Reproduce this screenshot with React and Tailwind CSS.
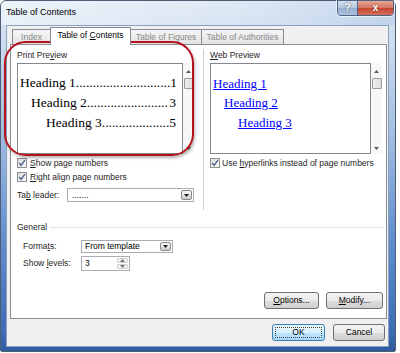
import React from 'react';

function Check() {
  return (
    <span className="w-[10px] h-[10px] shrink-0 border border-[#8f8f8f] bg-[linear-gradient(135deg,#dcdcdc,#fbfbfb)] flex items-center justify-center">
      <svg width="8" height="8" viewBox="0 0 8 8">
        <path d="M1.2 3.8 L3.1 6.3 L6.9 1.2" fill="none" stroke="#4a5a8c" strokeWidth="1.3" />
      </svg>
    </span>
  );
}

function Arrow({ up }) {
  return (
    <svg width="5" height="3" viewBox="0 0 5 3">
      <path d={up ? 'M0 3h5L2.5 0z' : 'M0 0h5L2.5 3z'} fill="#1a1a1a" />
    </svg>
  );
}

function DropBtn() {
  return (
    <span className="w-[11px] h-full shrink-0 border border-[#8a8a8a] rounded-[2px] bg-[linear-gradient(#f4f4f4,#ebebeb_50%,#dcdcdc_51%,#cfcfcf)] flex items-center justify-center">
      <Arrow />
    </span>
  );
}

function Scroll() {
  return (
    <div className="w-[11px] shrink-0 flex flex-col items-center bg-[#f7f7f7]">
      <div className="h-[10px] flex items-center justify-center mt-[3px] opacity-70">
        <Arrow up />
      </div>
      <div className="w-[10px] h-[11px] mt-[2px] border border-[#9a9a9a] rounded-[1px] bg-[linear-gradient(90deg,#f0f0f0,#dcdcdc)]" />
      <div className="flex-1" />
      <div className="h-[10px] flex items-center justify-center mb-[1px] opacity-70">
        <Arrow />
      </div>
    </div>
  );
}

function Btn({ children, w }) {
  return (
    <div className={`${w} h-[17px] border border-[#707070] rounded-[3px] bg-[linear-gradient(#f2f2f2,#ebebeb_50%,#dddddd_51%,#cfcfcf)] flex items-center justify-center text-black`}>
      {children}
    </div>
  );
}

function TocLine({ pl, label, dots, page }) {
  return (
    <div className={`flex h-[20px] items-center whitespace-nowrap leading-none ${pl}`}>
      <span>{label}</span>
      <span>{'.'.repeat(dots)}</span>
      <span className="ml-auto">{page}</span>
    </div>
  );
}

export default function App() {
  return (
    <div className="relative w-[400px] h-[353px] bg-white font-['Liberation_Sans',Arial,sans-serif] text-[8.5px] text-[#1e1e1e]">
      <div className="w-[396px] h-[352px] border border-[#4c5d76] rounded-t-[6px] rounded-b-[2px] bg-[linear-gradient(180deg,#dce7f4_0px,#cddcef_40px,#a4bfe2_130px,#6591cf_230px,#3e6cb5_330px,#2f5aa0)] flex flex-col">
        <div className="h-[24px] flex items-start justify-between rounded-t-[5px] bg-[linear-gradient(90deg,rgba(255,255,255,0.5),rgba(255,255,255,0.1)_60%,rgba(120,160,210,0.2))]">
          <span className="pl-[5px] pt-[5px] text-[9px] leading-[12px] text-black">Table of Contents</span>
          <div className="flex h-[16px] -mt-px mr-[1px] border border-[#4e6484] rounded-b-[4px] overflow-hidden shadow-[0_0_0_1px_rgba(255,255,255,0.6)]">
            <div className="w-[20px] border-r border-[#4e6484] bg-[linear-gradient(#d4e0ee,#b3c6de_50%,#98b1d2_51%,#a9c1de)] flex items-center justify-center text-white text-[10px] font-bold leading-none [text-shadow:0_0_2px_#2c3e5c]">
              ?
            </div>
            <div className="w-[35px] bg-[linear-gradient(#e8a595,#d47562_50%,#c2442f_51%,#d5715a)] flex items-center justify-center text-white text-[10px] font-bold leading-none [text-shadow:0_0_2px_#6b1a10]">
              x
            </div>
          </div>
        </div>

        <div className="ml-[5px] w-[383px] h-[322px] border border-[#8aa0bf] bg-[#f0f0f0] flex flex-col">
          <div className="h-[18px] flex items-end pl-[5px]">
            <div className="w-[39px] h-[15px] border border-b-0 border-[#898c95] bg-[linear-gradient(#f5f5f5,#e4e4e4)] text-[#8a8a8a] flex items-center justify-center">
              Index
            </div>
            <div className="-ml-px w-[81px] h-[18px] -mb-px relative z-10 border border-b-0 border-[#898c95] bg-white text-black flex items-center justify-center pb-[2px]">
              <span>
                Table of <span className="underline">C</span>ontents
              </span>
            </div>
            <div className="-ml-px w-[72px] h-[15px] border border-b-0 border-[#898c95] bg-[linear-gradient(#f5f5f5,#e4e4e4)] text-[#8a8a8a] flex items-center justify-center">
              Table of Figures
            </div>
            <div className="-ml-px w-[83px] h-[15px] border border-b-0 border-[#898c95] bg-[linear-gradient(#f5f5f5,#e4e4e4)] text-[#8a8a8a] flex items-center justify-center">
              Table of Authorities
            </div>
          </div>

          <div className="ml-[3px] w-[377px] h-[275px] border border-[#898c95] bg-white flex flex-col">
            <div className="flex pl-[6px] pt-[4px]">
              <div className="w-[177px] flex flex-col">
                <div className="h-[12px] leading-[12px]">
                  Print Pre<span className="underline">v</span>iew
                </div>
                <div className="mt-[2px] flex h-[91px]">
                  <div className="w-[166px] border border-[#828790] bg-white pt-[9px] pr-[6px] font-['Liberation_Serif',serif] text-[13.5px] text-black">
                    <TocLine pl="pl-[2px]" label="Heading 1" dots={28} page="1" />
                    <TocLine pl="pl-[13px]" label="Heading 2" dots={24} page="3" />
                    <TocLine pl="pl-[28px]" label="Heading 3" dots={20} page="5" />
                  </div>
                  <Scroll />
                </div>
                <div className="mt-[3px] h-[12px] flex items-center gap-[3px]">
                  <Check />
                  <span>
                    <span className="underline">S</span>how page numbers
                  </span>
                </div>
                <div className="mt-[2px] h-[12px] flex items-center gap-[3px]">
                  <Check />
                  <span>
                    <span className="underline">R</span>ight align page numbers
                  </span>
                </div>
                <div className="mt-[5px] h-[14px] flex items-center">
                  <span className="w-[50px]">
                    Ta<span className="underline">b</span> leader:
                  </span>
                  <div className="w-[127px] h-[14px] border border-[#abadb3] bg-white flex items-stretch p-px">
                    <span className="flex-1 pl-[3px] leading-[10px] text-black">.......</span>
                    <DropBtn />
                  </div>
                </div>
              </div>

              <div className="ml-[9px] w-[180px] h-[161px] border-l border-[#cfcfcf] pl-[6px] flex flex-col">
                <div className="h-[12px] leading-[12px]">
                  <span className="underline">W</span>eb Preview
                </div>
                <div className="mt-[2px] flex h-[91px]">
                  <div className="w-[161px] border border-[#828790] bg-white pt-[9px] font-['Liberation_Serif',serif] text-[13px] leading-none text-[#0000ff]">
                    <div className="h-[20px] flex items-center pl-[2px]">
                      <span className="underline">Heading 1</span>
                    </div>
                    <div className="h-[19px] flex items-center pl-[13px]">
                      <span className="underline">Heading 2</span>
                    </div>
                    <div className="h-[20px] flex items-center pl-[27px]">
                      <span className="underline">Heading 3</span>
                    </div>
                  </div>
                  <Scroll />
                </div>
                <div className="mt-[3px] h-[12px] flex items-center gap-[2px]">
                  <Check />
                  <span>
                    Use <span className="underline">h</span>yperlinks instead of page numbers
                  </span>
                </div>
              </div>
            </div>

            <div className="mt-[11px] pl-[6px] pr-[3px] h-[12px] flex items-center gap-[3px]">
              <span>General</span>
              <span className="flex-1 h-px bg-[#e2e2e2]" />
            </div>

            <div className="mt-[7px] pl-[12px] h-[13px] flex items-center">
              <span className="w-[58px]">
                Forma<span className="underline">t</span>s:
              </span>
              <div className="w-[92px] h-[13px] border border-[#abadb3] bg-white flex items-stretch p-px">
                <span className="flex-1 pl-[2px] leading-[9px] text-black">From template</span>
                <DropBtn />
              </div>
            </div>

            <div className="mt-[3px] pl-[12px] h-[15px] flex items-center">
              <span className="w-[58px]">
                Show <span className="underline">l</span>evels:
              </span>
              <div className="w-[49px] h-[15px] border border-[#abadb3] bg-white flex items-stretch p-px">
                <span className="flex-1 pl-[2px] leading-[11px] text-black">3</span>
                <div className="w-[11px] flex flex-col gap-px">
                  <span className="flex-1 border border-[#b5b5b5] rounded-[1px] bg-[#eeeeee] flex items-center justify-center opacity-60">
                    <Arrow up />
                  </span>
                  <span className="flex-1 border border-[#b5b5b5] rounded-[1px] bg-[#eeeeee] flex items-center justify-center opacity-60">
                    <Arrow />
                  </span>
                </div>
              </div>
            </div>

            <div className="mt-[21px] pr-[3px] flex justify-end gap-[7px]">
              <Btn w="w-[55px]">
                <span>
                  <span className="underline">O</span>ptions...
                </span>
              </Btn>
              <Btn w="w-[57px]">
                <span>
                  <span className="underline">M</span>odify...
                </span>
              </Btn>
            </div>
          </div>

          <div className="mt-[5px] pr-[3px] flex justify-end gap-[8px]">
            <div className="w-[53px] h-[17px] border border-[#3c7fb1] rounded-[3px] bg-[linear-gradient(#eaf6fd,#d9f0fc_50%,#bee6fd_51%,#a7d9f5)] p-[2px] flex">
              <div className="flex-1 border border-dotted border-[#444] flex items-center justify-center text-black">
                OK
              </div>
            </div>
            <Btn w="w-[52px]">Cancel</Btn>
          </div>
        </div>
      </div>

      <div className="absolute left-[4px] top-[41px] w-[190px] h-[115px] border-2 border-[#b5121c] rounded-[22px] shadow-[1px_2px_3px_rgba(0,0,0,0.3)] pointer-events-none" />
    </div>
  );
}
